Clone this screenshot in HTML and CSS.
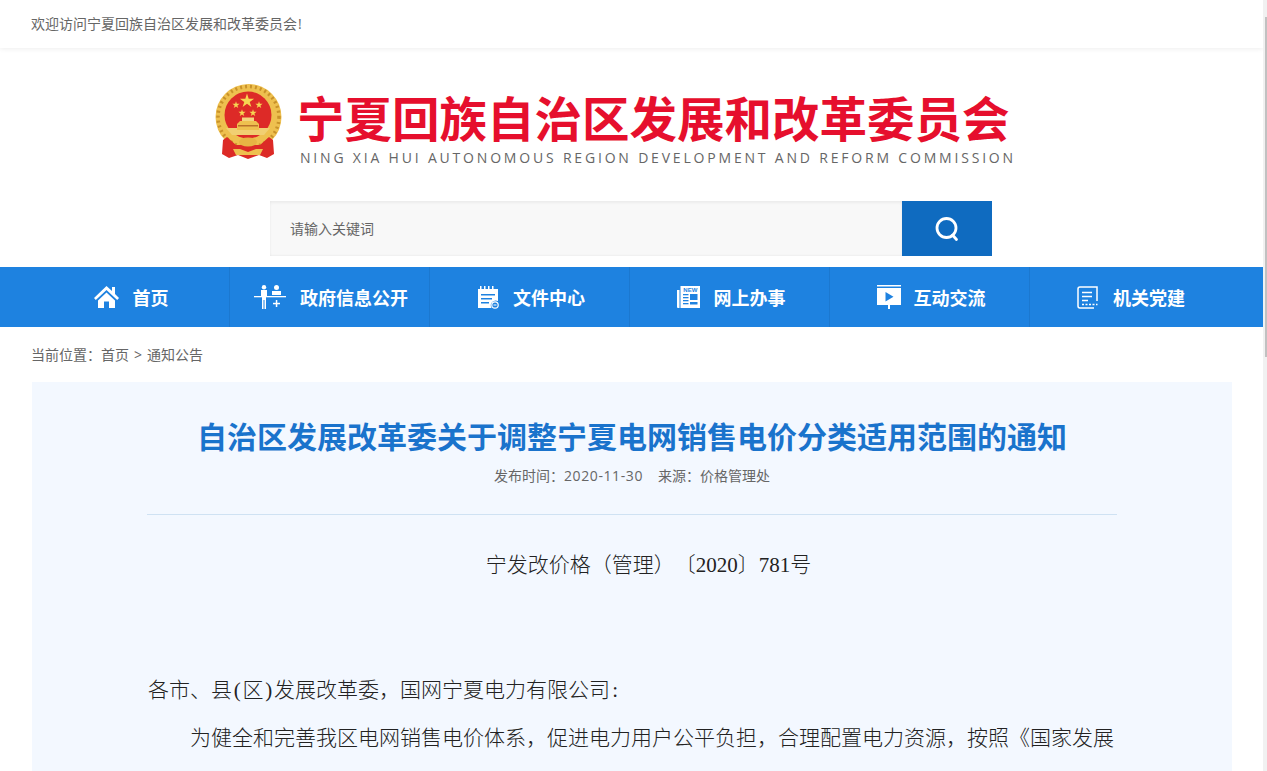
FILE: index.html
```html
<!DOCTYPE html>
<html lang="zh-CN">
<head>
  <meta charset="UTF-8">
  <title>自治区发展改革委关于调整宁夏电网销售电价分类适用范围的通知</title>
  <link rel="stylesheet" href="styles.css">
</head>
<body>
  <div class="shell">
    <div class="page">
      <div class="topbar">欢迎访问宁夏回族自治区发展和改革委员会<span class="bang">!</span></div>

      <div class="logo">
        <svg class="emblem" width="70" height="76" viewBox="0 0 70 76">
          <defs>
            <polygon id="star" points="0,-1 .225,-.309 .951,-.309 .363,.118 .588,.809 0,.382 -.588,.809 -.363,.118 -.951,-.309 -.225,-.309"/>
          </defs>
          <circle cx="34.500" cy="33" r="33" fill="#eec04f"/>
          <circle cx="34.500" cy="33" r="30.500" fill="none" stroke="#c9922a" stroke-width="3.500" stroke-dasharray="2 3"/>
          <circle cx="34" cy="31" r="23.500" fill="#dd2a27"/>
          <path d="M12 44 H56 L50 51 H18 Z" fill="#f1cf72"/>
          <path d="M23 46 V40 L26 37 H42 L45 40 V46 Z" fill="#eec04f"/>
          <rect x="28" y="33.500" width="12" height="3.500" fill="#f3d47e"/>
          <rect x="24" y="41" width="20" height="1.500" fill="#b9722a"/>
          <path d="M9 56 L13 53 L22 61 H46 L55 53 L59 56 L60 70 L53 74 L45 71 L34 75 L24 71 L15 74 L8 70 Z" fill="#dc2a26"/>
          <ellipse cx="34" cy="58" rx="9" ry="4.500" fill="#e7b444"/>
          <path d="M19 65 H26 L34 68 L42 65 H49 L46 71 H22 Z" fill="#eec04f"/>
          <g fill="#f6d552">
            <use href="#star" transform="translate(33 17) scale(7.500)"/>
            <use href="#star" transform="translate(22 21) scale(3.800)"/>
            <use href="#star" transform="translate(45 21) scale(3.800)"/>
            <use href="#star" transform="translate(28 29) scale(3.800)"/>
            <use href="#star" transform="translate(39 29) scale(3.800)"/>
          </g>
        </svg>
        <div class="logoText">
          <div class="logoCn">宁夏回族自治区发展和改革委员会</div>
          <div class="logoEn">NING XIA HUI AUTONOMOUS REGION DEVELOPMENT AND REFORM COMMISSION</div>
        </div>
      </div>

      <div class="search">
        <div class="searchInput">请输入关键词</div>
        <div class="searchBtn">
          <svg width="26" height="26" viewBox="0 0 26 26" fill="none" stroke="#fff" stroke-width="2.800">
            <circle cx="12.500" cy="12" r="9.500"/>
            <path d="M18.500 19 L22.500 23.500" stroke-linecap="round"/>
          </svg>
        </div>
      </div>

      <div class="nav">
        <a class="navItem">
          <svg width="25" height="22" viewBox="0 0 25 22" fill="#fff">
            <path d="M12.500 0 L0 12 L1.800 14 L12.500 4 L23.200 14 L25 12 L21 8 V1 H18 V5 Z"/>
            <path d="M4 14.500 L12.500 6.500 L21 14.500 V22 H15 V15.500 H10 V22 H4 Z"/>
          </svg>
          首页
        </a>
        <a class="navItem">
          <svg width="32" height="24" viewBox="0 0 32 24" fill="#fff">
            <circle cx="10" cy="2.200" r="2.200"/>
            <path d="M7 5 H13 V12 H12 V24 H10.500 V15 H9.500 V24 H8 V12 H7 Z"/>
            <circle cx="22.500" cy="2.500" r="2.500"/>
            <path d="M18 6 H27 V10 H18 Z"/>
            <rect x="0" y="11" width="32" height="1.300"/>
            <rect x="21.800" y="15" width="1.500" height="7"/>
            <rect x="19" y="17.800" width="7" height="1.500"/>
          </svg>
          政府信息公开
        </a>
        <a class="navItem">
          <svg width="22" height="23" viewBox="0 0 22 23" fill="#fff">
            <path d="M1 3 H3 V0 H4.500 V3 H7 V0 H8.500 V3 H11 V0 H12.500 V3 H15 V0 H16.500 V3 H21 V15 A5 5 0 0 0 14.500 22 H1 Z M4 8 V9.500 H18 V8 Z M4 12 V13.500 H15 V12 Z M4 16 V17.500 H12 V16 Z"/>
            <circle cx="18" cy="19" r="3.200" fill="none" stroke="#fff" stroke-width="1.200"/>
            <rect x="16.500" y="18.500" width="3" height="1"/>
          </svg>
          文件中心
        </a>
        <a class="navItem">
          <svg width="23" height="22" viewBox="0 0 23 22" fill="#fff">
            <path d="M0 4 H2.500 V22 H1 A1 1 0 0 1 0 21 Z"/>
            <path d="M3.500 0 H23 V22 H3.500 Z"/>
            <text class="newTag" x="13.300" y="6.300" text-anchor="middle">NEW</text>
            <rect x="6" y="8" width="5.500" height="1.300" fill="#1e82e0"/>
            <rect x="6" y="11" width="5.500" height="1.300" fill="#1e82e0"/>
            <rect x="6" y="14" width="5.500" height="1.300" fill="#1e82e0"/>
            <rect x="6" y="17" width="5.500" height="1.300" fill="#1e82e0"/>
            <rect x="13" y="8" width="7.500" height="6" fill="#1e82e0"/>
            <rect x="13" y="16" width="7.500" height="2.500" fill="#1e82e0"/>
          </svg>
          网上办事
        </a>
        <a class="navItem">
          <svg width="24" height="24" viewBox="0 0 24 24" fill="#fff">
            <rect x="0" y="0" width="24" height="1.500"/>
            <path d="M0 3 H24 V20 H13 V24 H11 V20 H0 Z M8.500 7 V16.500 L16.500 11.700 Z" fill-rule="evenodd"/>
          </svg>
          互动交流
        </a>
        <a class="navItem">
          <svg width="22" height="23" viewBox="0 0 22 23" fill="none" stroke="#fff" stroke-width="1.500">
            <path d="M20 15 V1 H3 A2 2 0 0 0 1 3 V20 A2 2 0 0 0 3 22 H17"/>
            <path d="M5 6.500 H15 M5 10.500 H15 M5 14.500 H11"/>
            <path d="M5 18.500 H20.500" stroke-dasharray="2 1.500"/>
          </svg>
          机关党建
        </a>
      </div>

      <div class="crumb">当前位置：首页<span class="crumbSep">&gt;</span>通知公告</div>

      <div class="panel">
        <h1 class="artTitle">自治区发展改革委关于调整宁夏电网销售电价分类适用范围的通知</h1>
        <div class="artMeta"><span>发布时间：<span class="date">2020-11-30</span></span><span>来源：价格管理处</span></div>
        <div class="artBody">
          <p class="docNo">宁发改价格（管理）〔2020〕781号</p>
          <p class="gap">各市、县<span class="half">(</span>区<span class="half">)</span>发展改革委，国网宁夏电力有限公司<span class="half">:</span></p>
          <p class="indent">为健全和完善我区电网销售电价体系，促进电力用户公平负担，合理配置电力资源，按照《国家发展</p>
        </div>
      </div>
    </div>

    <div class="scrollbar"><div class="thumb"></div></div>
  </div>
</body>
</html>
```

FILE: styles.css
```css
html, body {
  margin: 0;
  padding: 0;
  height: 771px;
  overflow: hidden;
  background-color: #ffffff;
}

body {
  color: #666666;
  font-family: "Open Sans", "Noto Sans CJK SC", sans-serif;
  font-size: 14px;
}

.shell {
  display: flex;
  height: 771px;
}

.page {
  width: 1263px;
  overflow: hidden;
}

.scrollbar {
  width: 4px;
  background-color: #f1f1f1;
}

.thumb {
  width: 2px;
  height: 340px;
  margin: 17px 0 0 2px;
  background-color: #c1c1c1;
}

.topbar {
  height: 48px;
  line-height: 48px;
  padding-left: 31px;
  box-shadow: 0 1px 5px rgba(0, 0, 0, .07);
}

.bang {
  margin-left: 1px;
}

.logo {
  display: flex;
  padding: 36px 0 0 214px;
  height: 117px;
}

.logoText {
  margin-left: 16px;
}

.logoCn {
  height: 52px;
  line-height: 52px;
  margin: 7px 0 0 -3px;
  color: #e60f2d;
  font-family: "Noto Sans CJK SC", sans-serif;
  font-size: 47.500px;
  font-weight: 700;
  white-space: nowrap;
}

.logoEn {
  line-height: 18px;
  margin-top: 6px;
  color: #666666;
  font-size: 14px;
  letter-spacing: 2.810px;
  white-space: nowrap;
}

.search {
  display: flex;
  width: 722px;
  height: 55px;
  margin-left: 270px;
}

.searchInput {
  flex: 1;
  line-height: 55px;
  padding-left: 20px;
  background-color: #f8f8f8;
  box-shadow: inset 0 2px 3px rgba(0, 0, 0, .05), inset 0 -1px 2px rgba(0, 0, 0, .04);
}

.searchBtn {
  display: flex;
  align-items: center;
  justify-content: center;
  width: 90px;
  background-color: #0f6bc0;
}

.nav {
  display: flex;
  height: 60px;
  margin-top: 11px;
  padding-left: 30px;
  background-color: #1e82e0;
}

.navItem {
  display: flex;
  align-items: center;
  justify-content: center;
  gap: 14px;
  width: 200px;
  padding-left: 3px;
  box-sizing: border-box;
  border-right: 1px solid #1b78d0;
  color: #ffffff;
  font-family: "Noto Sans CJK SC", sans-serif;
  font-size: 18px;
  font-weight: 700;
}

.navItem:nth-child(5) {
  gap: 13px;
}

.navItem:last-child {
  border-right: 0;
  padding-left: 2px;
}

.newTag {
  fill: #1e82e0;
  font-family: "Liberation Sans", sans-serif;
  font-size: 6px;
  font-weight: 700;
}

.crumb {
  height: 55px;
  line-height: 56px;
  padding-left: 31px;
}

.crumbSep {
  margin: 0 5px;
}

.panel {
  width: 970px;
  height: 389px;
  margin-left: 32px;
  padding: 0 115px;
  background-color: #f3f8ff;
}

.artTitle {
  margin: 0;
  padding-top: 32px;
  line-height: 42px;
  color: #1a73cc;
  font-family: "Noto Sans CJK SC", sans-serif;
  font-size: 30px;
  font-weight: 700;
  text-align: center;
}

.artMeta {
  display: flex;
  justify-content: center;
  gap: 15px;
  height: 55px;
  margin-top: 3px;
  line-height: 34px;
  border-bottom: 1px solid #cfe2f3;
}

.date {
  letter-spacing: .6px;
}

.artBody {
  color: #222222;
  font-family: "Liberation Serif", "Noto Sans CJK SC", serif;
  font-size: 21px;
  font-weight: 300;
  text-spacing-trim: space-all;
}

.artBody p {
  margin: 0;
  line-height: 48px;
  white-space: nowrap;
}

.half {
  display: inline-block;
  width: 10.500px;
  text-align: center;
}

.docNo {
  padding: 26px 0 0 33px;
  text-align: center;
}

.gap {
  margin-top: 77px !important;
  padding-left: 1px;
}

.indent {
  padding-left: 43px;
}
```
